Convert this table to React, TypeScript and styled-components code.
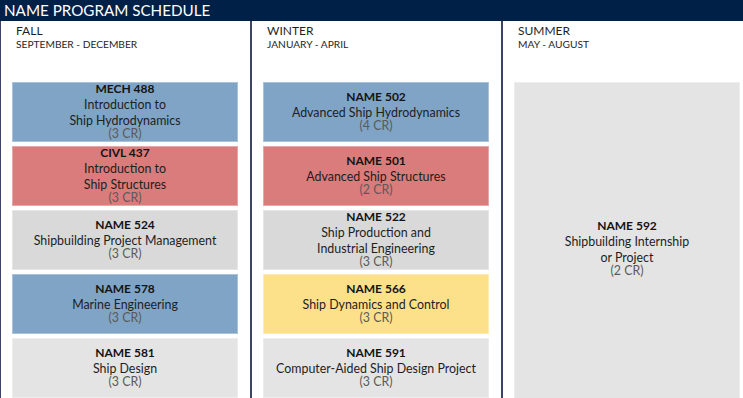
import React from "react";
import styled, { createGlobalStyle } from "styled-components";

const GlobalStyle = createGlobalStyle`
  html, body {
    margin: 0;
    padding: 0;
    overflow: hidden;
    background: #ffffff;
  }
  body {
    font-family: Lato, "Open Sans", "Liberation Sans", sans-serif;
    color: #222;
  }
  * { box-sizing: border-box; }
`;

type Tone = "blue" | "red" | "grey" | "light" | "yellow";

const toneColors: Record<Tone, string> = {
  blue: "#7fa4c5",
  red: "#d97c7b",
  grey: "#d9d9d9",
  light: "#e4e4e4",
  yellow: "#fde08a",
};

const Page = styled.div`
  width: 753px;
`;

const TitleBar = styled.header`
  height: 21px;
  background: #012047;
  color: #ffffff;
  font-size: 15.2px;
  line-height: 21px;
  padding-left: 4px;
`;

const Columns = styled.div`
  display: grid;
  grid-template-columns: repeat(3, 251px);
`;

const Column = styled.section`
  border-left: 1px solid #3c4466;
  border-right: 1px solid #3c4466;
  padding: 0 12px 0 11px;
`;

const SeasonHead = styled.div`
  height: 61px;
  padding: 3px 0 0 4px;
`;

const SeasonName = styled.div`
  font-size: 12px;
  line-height: 14px;
  color: #1f1f1f;
`;

const SeasonMonths = styled.div`
  font-size: 10.2px;
  line-height: 12.5px;
  color: #262626;
`;

const CardList = styled.div`
  display: flex;
  flex-direction: column;
  gap: 4px;
`;

const Card = styled.div<{ $tone: Tone; $height: number }>`
  height: ${(p) => p.$height}px;
  background: ${(p) => toneColors[p.$tone]};
  border: 1px solid rgba(255, 255, 255, 0.35);
  display: flex;
  flex-direction: column;
  justify-content: center;
  align-items: center;
  text-align: center;
  padding-bottom: 4.3px;
`;

const Code = styled.div`
  font-size: 12px;
  font-weight: 700;
  line-height: 16px;
  margin-bottom: 2.45px;
  color: #141414;
`;

const TitleLine = styled.div<{ $spread: boolean }>`
  font-size: 12.4px;
  line-height: 12.5px;
  color: #1e1e1e;
  white-space: nowrap;
  & + & {
    margin-top: ${(p) => (p.$spread ? 3.5 : 0)}px;
  }
`;

const Credits = styled.div`
  font-size: 12.4px;
  line-height: 11.5px;
  color: #5a5a5a;
`;

type Course = {
  code: string;
  title: string[];
  credits: string;
  tone: Tone;
  spread?: boolean;
  height?: number;
};

type Season = {
  name: string;
  months: string;
  courses: Course[];
};

const seasons: Season[] = [
  {
    name: "FALL",
    months: "SEPTEMBER - DECEMBER",
    courses: [
      { code: "MECH 488", title: ["Introduction to", "Ship Hydrodynamics"], credits: "(3 CR)", tone: "blue" },
      { code: "CIVL 437", title: ["Introduction to", "Ship Structures"], credits: "(3 CR)", tone: "red" },
      { code: "NAME 524", title: ["Shipbuilding Project Management"], credits: "(3 CR)", tone: "grey" },
      { code: "NAME 578", title: ["Marine Engineering"], credits: "(3 CR)", tone: "blue" },
      { code: "NAME 581", title: ["Ship Design"], credits: "(3 CR)", tone: "light" },
    ],
  },
  {
    name: "WINTER",
    months: "JANUARY - APRIL",
    courses: [
      { code: "NAME 502", title: ["Advanced Ship Hydrodynamics"], credits: "(4 CR)", tone: "blue" },
      { code: "NAME 501", title: ["Advanced Ship Structures"], credits: "(2 CR)", tone: "red" },
      {
        code: "NAME 522",
        title: ["Ship Production and", "Industrial Engineering"],
        credits: "(3 CR)",
        tone: "grey",
        spread: true,
      },
      { code: "NAME 566", title: ["Ship Dynamics and Control"], credits: "(3 CR)", tone: "yellow" },
      { code: "NAME 591", title: ["Computer-Aided Ship Design Project"], credits: "(3 CR)", tone: "light" },
    ],
  },
  {
    name: "SUMMER",
    months: "MAY - AUGUST",
    courses: [
      {
        code: "NAME 592",
        title: ["Shipbuilding Internship", "or Project"],
        credits: "(2 CR)",
        tone: "light",
        spread: true,
        height: 334,
      },
    ],
  },
];

export default function App() {
  return (
    <>
      <GlobalStyle />
      <Page>
        <TitleBar>NAME PROGRAM SCHEDULE</TitleBar>
        <Columns>
          {seasons.map((season) => (
            <Column key={season.name}>
              <SeasonHead>
                <SeasonName>{season.name}</SeasonName>
                <SeasonMonths>{season.months}</SeasonMonths>
              </SeasonHead>
              <CardList>
                {season.courses.map((c) => (
                  <Card key={c.code} $tone={c.tone} $height={c.height ?? 60}>
                    <Code>{c.code}</Code>
                    {c.title.map((line) => (
                      <TitleLine key={line} $spread={!!c.spread}>
                        {line}
                      </TitleLine>
                    ))}
                    <Credits>{c.credits}</Credits>
                  </Card>
                ))}
              </CardList>
            </Column>
          ))}
        </Columns>
      </Page>
    </>
  );
}
